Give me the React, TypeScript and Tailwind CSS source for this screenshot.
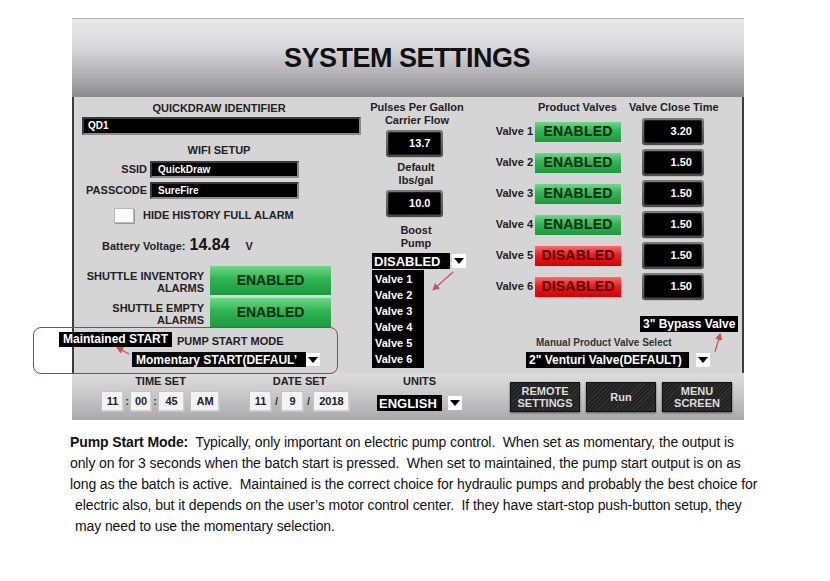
import React from 'react';

// black input field with a bevelled frame
const Field: React.FC<{ className?: string; children?: React.ReactNode }> = ({ className = '', children }) => (
  <div
    className={`bg-black border-2 border-t-[#3a3a3a] border-l-[#3a3a3a] border-b-[#8a8a8a] border-r-[#8a8a8a] text-white font-bold text-[10px] leading-none flex items-center ${className}`}
  >
    {children}
  </div>
);

const ValueBox: React.FC<{ value: string; className?: string }> = ({ value, className = '' }) => (
  <div className={`rounded-[3px] bg-[linear-gradient(180deg,#7a7a7a,#4a4a4a)] p-[2px] shadow-[0_1px_0_#bdbdbd] ${className}`}>
    <div className="h-full w-full rounded-[2px] bg-black border border-[#202020] flex items-center justify-end pr-[9px] text-white font-bold text-[11px]">
      {value}
    </div>
  </div>
);

const DropArrow: React.FC<{ className?: string }> = ({ className = '' }) => (
  <div className={`bg-white flex items-center justify-center ${className}`}>
    <div className="w-0 h-0 border-l-[5px] border-r-[5px] border-t-[6px] border-l-transparent border-r-transparent border-t-black" />
  </div>
);

const StatusBtn: React.FC<{ on: boolean; className?: string; text?: string }> = ({ on, className = '', text }) => (
  <div
    className={`flex items-center justify-center font-bold ${
      on
        ? 'bg-[linear-gradient(180deg,#6fd88a_0%,#2fb552_45%,#1b9a3d_100%)] text-[#0d2a13]'
        : 'bg-[linear-gradient(180deg,#ff6a6a_0%,#f01c1c_45%,#d40000_100%)] text-[#4a0000]'
    } ${className}`}
  >
    {text ?? (on ? 'ENABLED' : 'DISABLED')}
  </div>
);

const SmallBox: React.FC<{ v: string; w: string }> = ({ v, w }) => (
  <div
    className={`${w} h-[21px] bg-[#f3f3f3] border border-[#c4c4c4] shadow-[inset_-1px_-1px_0_#d0d0d0] flex items-center justify-center text-[11px] font-bold text-[#222]`}
  >
    {v}
  </div>
);

const DarkBtn: React.FC<{ children: React.ReactNode }> = ({ children }) => (
  <div className="w-[70px] h-[30px] border border-[#111] bg-[repeating-linear-gradient(135deg,#222_0px,#222_2px,#333_2px,#333_3px)] shadow-[0_1px_2px_#555] flex items-center justify-center text-center text-[11px] leading-[12px] font-bold text-[#dcdcdc]">
    {children}
  </div>
);

const valves = [
  { n: 1, on: true, t: '3.20' },
  { n: 2, on: true, t: '1.50' },
  { n: 3, on: true, t: '1.50' },
  { n: 4, on: true, t: '1.50' },
  { n: 5, on: false, t: '1.50' },
  { n: 6, on: false, t: '1.50' },
];

export default function App() {
  return (
    <div className="relative w-[830px] h-[581px] bg-white overflow-hidden font-['Liberation_Sans',Arial,sans-serif] text-[#1a1a1a]">
      <div className="pt-[18px] pl-[72px]">
        <div className="w-[672px]">
          {/* header */}
          <div className="h-[79px] bg-[linear-gradient(180deg,#e9e9ea_0%,#d9d9db_35%,#b3b3b6_70%,#8b8b8e_100%)] border-t border-[#b0b0b0] flex items-center justify-center">
            <h1 className="text-[27px] font-bold tracking-[-0.5px] text-[#111] ml-[-2px]">SYSTEM SETTINGS</h1>
          </div>

          {/* body */}
          <div className="h-[276px] bg-[#d5d5d6] border-l-2 border-r-2 border-[#3c3c3c] flex">
            {/* left column */}
            <div className="w-[290px] flex flex-col items-center">
              <div className="mt-[5px] text-[11px] font-bold leading-[13px] text-[#222]">QUICKDRAW IDENTIFIER</div>
              <Field className="mt-[2px] ml-[8px] self-start w-[279px] h-[18px] pl-[4px]">QD1</Field>
              <div className="mt-[9px] text-[11px] font-bold leading-[13px] text-[#222]">WIFI SETUP</div>
              <div className="mt-[4px] self-start flex flex-col gap-[4px]">
                <div className="flex items-center">
                  <div className="w-[76px] text-right pr-[3px] text-[11px] font-bold text-[#222]">SSID</div>
                  <Field className="w-[149px] h-[17px] pl-[6px] text-[9px]">QuickDraw</Field>
                </div>
                <div className="flex items-center">
                  <div className="w-[76px] text-right pr-[3px] text-[11px] font-bold text-[#222]">PASSCODE</div>
                  <Field className="w-[149px] h-[17px] pl-[6px] text-[9px]">SureFire</Field>
                </div>
              </div>
              <div className="mt-[8px] self-start ml-[40px] flex items-center gap-[9px]">
                <div className="w-[20px] h-[15px] bg-[#fafafa] border border-[#b8b8b8] shadow-[1px_1px_0_#9a9a9a]" />
                <div className="text-[11px] font-bold text-[#222]">HIDE HISTORY FULL ALARM</div>
              </div>
              <div className="mt-[9px] self-start ml-[28px] flex items-baseline">
                <span className="text-[11px] font-bold text-[#222]">Battery Voltage:</span>
                <span className="ml-[4px] text-[16px] font-bold text-[#111]">14.84</span>
                <span className="ml-[16px] text-[11px] font-bold text-[#222]">V</span>
              </div>
              <div className="mt-[9px] self-start flex flex-col gap-[3px]">
                <div className="flex items-center">
                  <div className="w-[136px] text-right pr-[6px] text-[11px] leading-[12px] font-bold text-[#222] pt-[4px]">
                    SHUTTLE INVENTORY
                    <br />
                    ALARMS
                  </div>
                  <StatusBtn on className="w-[121px] h-[29px] text-[14px]" />
                </div>
                <div className="flex items-center">
                  <div className="w-[136px] text-right pr-[6px] text-[11px] leading-[12px] font-bold text-[#222] pt-[4px]">
                    SHUTTLE EMPTY
                    <br />
                    ALARMS
                  </div>
                  <StatusBtn on className="w-[121px] h-[29px] text-[14px]" />
                </div>
              </div>
              <div className="mt-[6px] self-start ml-[103px] text-[11px] font-bold text-[#222]">PUMP START MODE</div>
              <div className="mt-[3px] self-start ml-[58px] flex items-center">
                <div className="w-[174px] h-[15px] bg-black text-white text-[12px] font-bold leading-none flex items-center pl-[4px] overflow-hidden whitespace-nowrap">
                  Momentary START(DEFAUL&#8217;
                </div>
                <DropArrow className="w-[14px] h-[13px]" />
              </div>
            </div>

            {/* middle column */}
            <div className="w-[110px] flex flex-col items-center text-[11px] font-bold leading-[13px] text-[#222]">
              <div className="mt-[4px] text-center mr-[4px]">
                Pulses Per Gallon
                <br />
                Carrier Flow
              </div>
              <ValueBox value="13.7" className="mt-[3px] mr-[10px] w-[57px] h-[27px]" />
              <div className="mt-[4px] text-center mr-[6px]">
                Default
                <br />
                lbs/gal
              </div>
              <ValueBox value="10.0" className="mt-[3px] mr-[10px] w-[57px] h-[27px]" />
              <div className="mt-[7px] text-center mr-[6px]">
                Boost
                <br />
                Pump
              </div>
              <div className="mt-[3px] self-start ml-[8px] flex items-center gap-[2px]">
                <div className="w-[78px] h-[16px] bg-black text-white text-[13px] font-bold leading-none flex items-center pl-[2px]">DISABLED</div>
                <DropArrow className="w-[14px] h-[14px]" />
              </div>
              <div className="mt-[1px] self-start ml-[8px] w-[52px] bg-black text-white text-[11px] font-bold leading-[16px] pl-[3px] pt-[1px] pb-[1px]">
                {[1, 2, 3, 4, 5, 6].map((i) => (
                  <div key={i}>Valve {i}</div>
                ))}
              </div>
            </div>

            {/* right column */}
            <div className="flex-1 flex flex-col">
              <div className="mt-[4px] flex text-[11px] font-bold text-[#222] leading-[13px]">
                <div className="ml-[64px]">Product Valves</div>
                <div className="ml-[12px]">Valve Close Time</div>
              </div>
              <div className="mt-[2px] flex flex-col">
                {valves.map((v) => (
                  <div key={v.n} className="h-[31px] flex items-center">
                    <div className="w-[60px] text-right pr-[1px] text-[11px] font-bold text-[#222]">Valve {v.n}</div>
                    <StatusBtn on={v.on} className="w-[86px] h-[20px] text-[14px] tracking-[0.2px] ml-[1px]" />
                    <ValueBox value={v.t} className="ml-[21px] w-[62px] h-[27px]" />
                  </div>
                ))}
              </div>
              <div className="mt-[34px] ml-[62px] text-[10px] font-bold text-[#333] leading-[13px]">Manual Product Valve Select</div>
              <div className="mt-[3px] ml-[52px] flex items-center gap-[7px]">
                <div className="w-[163px] h-[16px] bg-black text-white text-[12px] font-bold leading-none flex items-center pl-[3px] whitespace-nowrap">
                  2&quot; Venturi Valve(DEFAULT)
                </div>
                <DropArrow className="w-[14px] h-[14px]" />
              </div>
            </div>
          </div>

          {/* bottom bar */}
          <div className="h-[47px] bg-[linear-gradient(180deg,#dcdcdc_0%,#c9c9ca_45%,#a9a9ab_100%)] flex items-start">
            <div className="ml-[29px] flex flex-col items-center">
              <div className="mt-[2px] text-[11px] font-bold text-[#222] leading-[13px]">TIME SET</div>
              <div className="mt-[3px] flex items-center text-[11px] font-bold text-[#333]">
                <SmallBox v="11" w="w-[23px]" />
                <span className="w-[6px] text-center">:</span>
                <SmallBox v="00" w="w-[22px]" />
                <span className="w-[6px] text-center">:</span>
                <SmallBox v="45" w="w-[27px]" />
                <span className="w-[5px]" />
                <SmallBox v="AM" w="w-[30px]" />
              </div>
            </div>
            <div className="ml-[29px] flex flex-col items-center">
              <div className="mt-[2px] text-[11px] font-bold text-[#222] leading-[13px]">DATE SET</div>
              <div className="mt-[3px] flex items-center text-[11px] font-bold text-[#333]">
                <SmallBox v="11" w="w-[23px]" />
                <span className="w-[9px] text-center">/</span>
                <SmallBox v="9" w="w-[23px]" />
                <span className="w-[9px] text-center">/</span>
                <SmallBox v="2018" w="w-[37px]" />
              </div>
            </div>
            <div className="ml-[27px] flex flex-col items-center">
              <div className="mt-[2px] text-[11px] font-bold text-[#222] leading-[13px]">UNITS</div>
              <div className="mt-[7px] flex items-center gap-[6px]">
                <div className="w-[65px] h-[16px] bg-black text-white text-[13px] font-bold leading-none flex items-center pl-[2px]">ENGLISH</div>
                <DropArrow className="w-[14px] h-[14px]" />
              </div>
            </div>
            <div className="ml-[48px] mt-[9px] flex gap-[6px]">
              <DarkBtn>
                REMOTE
                <br />
                SETTINGS
              </DarkBtn>
              <DarkBtn>Run</DarkBtn>
              <DarkBtn>
                MENU
                <br />
                SCREEN
              </DarkBtn>
            </div>
          </div>
        </div>
      </div>

      {/* annotation: pump start mode highlight */}
      <div className="absolute left-[33px] top-[327px] w-[305px] h-[47px] rounded-[8px] border border-[#c8302f]" />
      <div className="absolute left-[59px] top-[332px] h-[15px] px-[4px] bg-black text-white text-[12px] font-bold leading-[15px] whitespace-nowrap">
        Maintained START
      </div>
      <div className="absolute left-[640px] top-[316px] h-[16px] px-[3px] bg-black text-white text-[12px] font-bold leading-[16px] whitespace-nowrap">
        3&quot; Bypass Valve
      </div>

      {/* annotation arrows */}
      <svg className="absolute left-0 top-0 pointer-events-none" width="830" height="581">
        <defs>
          <marker id="ah" markerWidth="6" markerHeight="6" refX="4" refY="3" orient="auto">
            <path d="M0,0 L6,3 L0,6 Z" fill="#d94a48" />
          </marker>
        </defs>
        <line x1="129" y1="354" x2="118" y2="348" stroke="#d94a48" strokeWidth="1.2" markerEnd="url(#ah)" />
        <line x1="453" y1="272" x2="434" y2="289" stroke="#d94a48" strokeWidth="1.2" markerEnd="url(#ah)" />
        <line x1="715" y1="352" x2="720" y2="335" stroke="#d94a48" strokeWidth="1.2" markerEnd="url(#ah)" />
      </svg>

      {/* description */}
      <div className="absolute left-[70px] top-[432px] text-[14px] leading-[21px] text-[#111] tracking-[-0.1px]">
        <p className="whitespace-nowrap">
          <b>Pump Start Mode:</b>&nbsp; Typically, only important on electric pump control.&nbsp; When set as momentary, the output is
        </p>
        <p className="whitespace-nowrap">
          only on for 3 seconds when the batch start is pressed.&nbsp; When set to maintained, the pump start output is on as
        </p>
        <p className="whitespace-nowrap">
          long as the batch is active.&nbsp; Maintained is the correct choice for hydraulic pumps and probably the best choice for
        </p>
        <p className="whitespace-nowrap pl-[5px]">
          electric also, but it depends on the user&#8217;s motor control center.&nbsp; If they have start-stop push-button setup, they
        </p>
        <p className="whitespace-nowrap pl-[5px]">may need to use the momentary selection.</p>
      </div>
    </div>
  );
}
